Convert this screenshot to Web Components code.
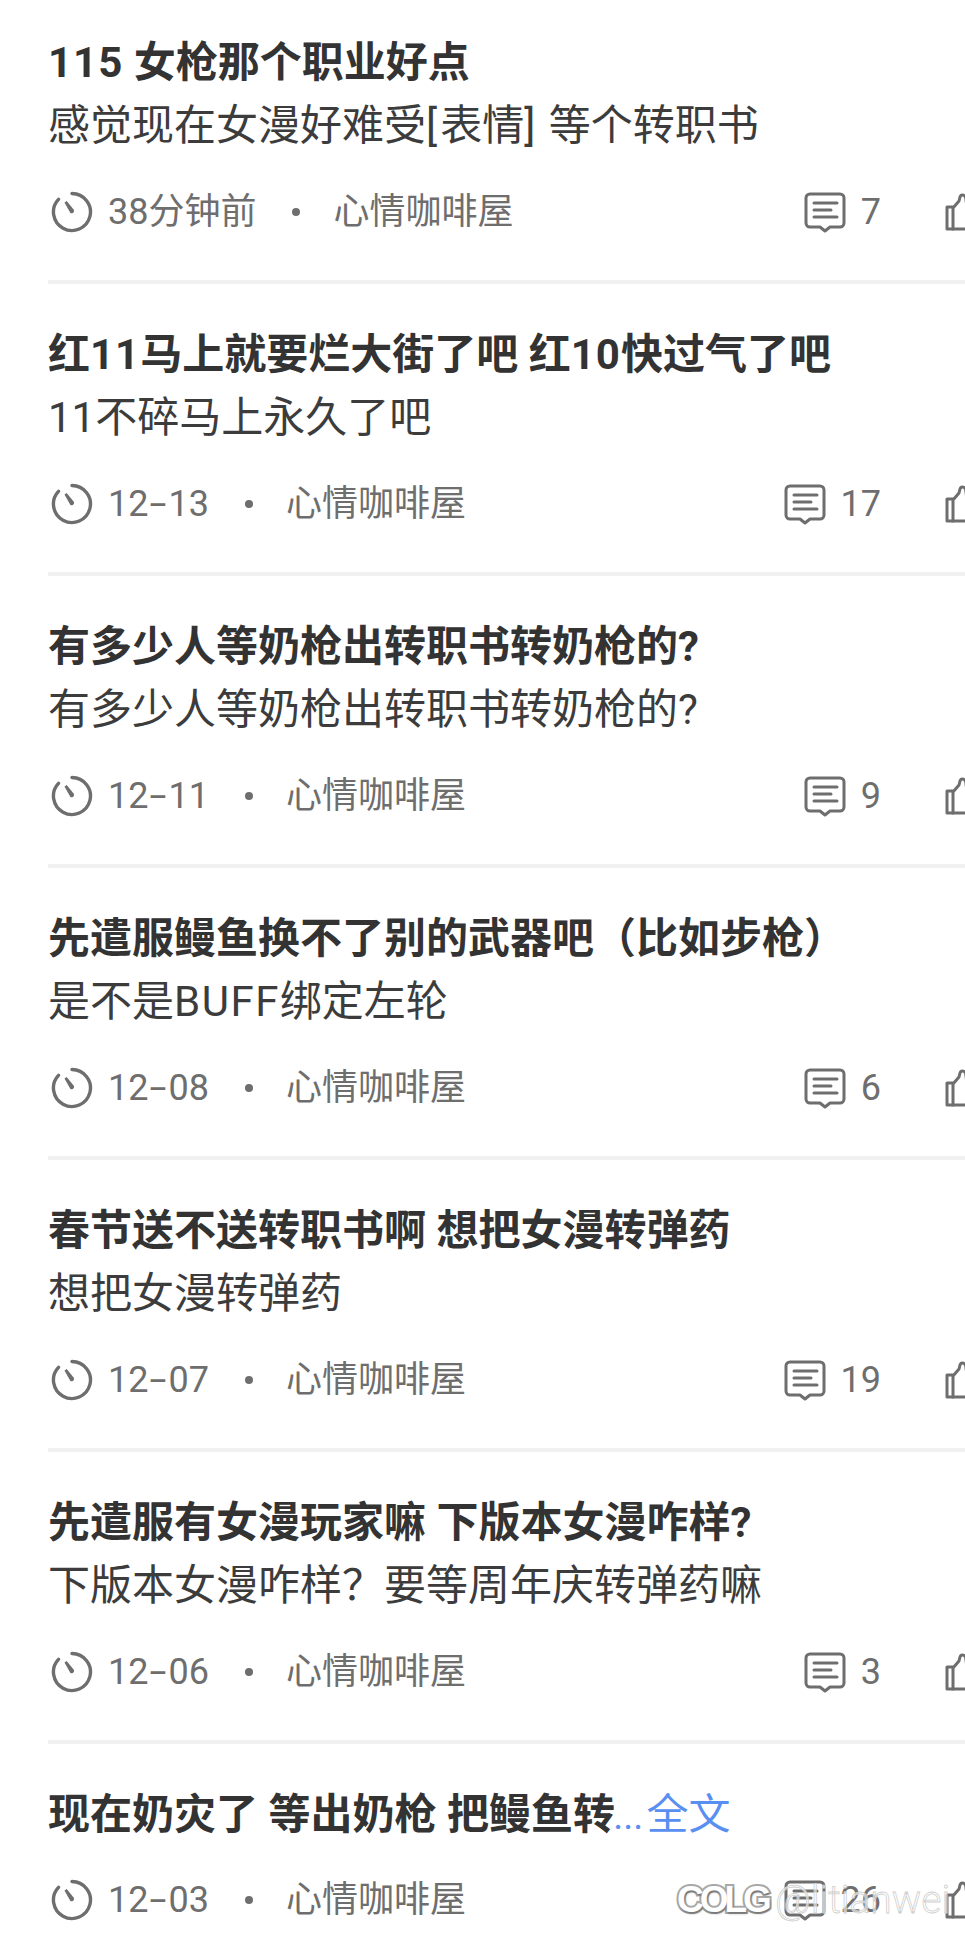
<!DOCTYPE html>
<html lang="zh">
<head>
<meta charset="utf-8">
<style>
html, body { margin: 0; background: #fff; }
body { width: 965px; height: 1939px; overflow: hidden; font-family: Roboto, "Noto Sans CJK SC", sans-serif; }
.num { letter-spacing: 1px; }
.wide { letter-spacing: 1.5px; }
.bracket { letter-spacing: 3px; }
</style>
</head>
<body>
<app-page>
  <post-item time="38分钟前" board="心情咖啡屋" count="7">
    <span slot="title"><span class="num">115</span> 女枪那个职业好点</span>
    <span slot="body">感觉现在女漫好难受<span class="bracket">[</span>表情<span class="bracket">]</span> 等个转职书</span>
  </post-item>
  <post-item time="12-13" board="心情咖啡屋" count="17">
    <span slot="title">红<span class="num">11</span>马上就要烂大街了吧 红<span class="num">10</span>快过气了吧</span>
    <span slot="body">11不碎马上永久了吧</span>
  </post-item>
  <post-item time="12-11" board="心情咖啡屋" count="9">
    <span slot="title">有多少人等奶枪出转职书转奶枪的?</span>
    <span slot="body">有多少人等奶枪出转职书转奶枪的?</span>
  </post-item>
  <post-item time="12-08" board="心情咖啡屋" count="6">
    <span slot="title">先遣服鳗鱼换不了别的武器吧（比如步枪）</span>
    <span slot="body">是不是<span class="wide">BUFF</span>绑定左轮</span>
  </post-item>
  <post-item time="12-07" board="心情咖啡屋" count="19">
    <span slot="title">春节送不送转职书啊 想把女漫转弹药</span>
    <span slot="body">想把女漫转弹药</span>
  </post-item>
  <post-item time="12-06" board="心情咖啡屋" count="3">
    <span slot="title">先遣服有女漫玩家嘛 下版本女漫咋样?</span>
    <span slot="body">下版本女漫咋样？要等周年庆转弹药嘛</span>
  </post-item>
  <post-item time="12-03" board="心情咖啡屋" count="26" last>
    <span slot="title">现在奶灾了 等出奶枪 把鳗鱼转<more-link>全文</more-link></span>
  </post-item>
  <colg-mark></colg-mark>
</app-page>

<script>
class AppPage extends HTMLElement {
  constructor() {
    super()
    this.attachShadow({ mode: "open" }).innerHTML = `
<style>
:host { display: block; position: relative; width: 965px; height: 1939px; overflow: hidden; background: #fff; }
.list { display: flex; flex-direction: column; margin-top: -8px; }
</style>
<div class="list"><slot></slot></div>`
  }
}

class PostItem extends HTMLElement {
  constructor() {
    super()
    const last = this.hasAttribute("last")
    const time = this.getAttribute("time").replace("-", `<span class="dash">-</span>`)
    this.attachShadow({ mode: "open" }).innerHTML = `
<style>
:host { display: block; padding: 41px 0 0 48px; }
.title { font-size: 42px; line-height: 60px; font-weight: 700; color: #333; white-space: nowrap; }
.body { font-size: 42px; line-height: 60px; margin-top: 3px; color: #3c3c3c; white-space: nowrap; }
.meta { display: flex; align-items: center; height: 44px; line-height: 44px; margin-top: ${last ? 32 : 34}px; font-size: 36px; color: #6e6e6e; white-space: nowrap; }
.clock { width: 44px; height: 44px; margin-left: 2px; flex: none; }
.time { margin-left: 14px; }
.dash { display: inline-block; width: 20px; text-align: center; transform: scaleX(1.7); }
.dot { width: 8px; height: 8px; border-radius: 50%; background: #6e6e6e; margin: 0 33px 0 36px; flex: none; }
.right { margin-left: auto; display: flex; align-items: center; }
.comment { width: 44px; height: 44px; flex: none; }
.count { margin-left: 14px; }
.thumb { width: 40px; height: 40px; margin-left: 64px; margin-right: -20px; flex: none; }
.line { height: 4px; margin-top: 46px; background: #f1f1f1; }
</style>
<div class="title"><slot name="title"></slot></div>
${last ? "" : `<div class="body"><slot name="body"></slot></div>`}
<div class="meta">
  <svg class="clock" viewBox="0 0 44 44" fill="none" stroke="#6e6e6e" stroke-width="3.4" stroke-linecap="round">
    <path d="M22 3.5a18.5 18.5 0 1 1-13.5 5.8"/>
    <path d="M14.5 12.5l2.2-1.6 7.3 9.2a2.5 2.5 0 0 1-3.6 2.9z" fill="#6e6e6e" stroke="none"/>
  </svg>
  <span class="time">${time}</span>
  <span class="dot"></span>
  <span class="board">${this.getAttribute("board")}</span>
  <div class="right">
    <svg class="comment" viewBox="0 0 44 44" fill="none" stroke="#6e6e6e" stroke-width="3" stroke-linejoin="round" stroke-linecap="round">
      <path d="M7 4h30a4 4 0 0 1 4 4v25a4 4 0 0 1-4 4H27l-5 4-5-4H7a4 4 0 0 1-4-4V8a4 4 0 0 1 4-4z"/>
      <path d="M11 13h23M11 20h17M11 27h23"/>
    </svg>
    <span class="count">${this.getAttribute("count")}</span>
    <svg class="thumb" viewBox="0 0 40 40" fill="none" stroke="#6e6e6e" stroke-width="3" stroke-linejoin="round" stroke-linecap="round">
      <path d="M8 15H2v22h6"/>
      <path d="M8 37h26V16H22l-1-8c0-6-5-6-6-3l-1 4-6 7v21z"/>
    </svg>
  </div>
</div>
${last ? "" : `<div class="line"></div>`}`
  }
}

class MoreLink extends HTMLElement {
  constructor() {
    super()
    this.attachShadow({ mode: "open" }).innerHTML = `
<style>
:host { display: inline; color: #5a8ff2; font-weight: 400; }
.dots { font-size: 38px; margin: 0 3px 0 -12px; letter-spacing: 0; }
</style><span class="dots">...</span><slot></slot>`
  }
}

class ColgMark extends HTMLElement {
  constructor() {
    super()
    this.attachShadow({ mode: "open" }).innerHTML = `
<style>
:host { position: absolute; left: 677px; top: 1878px; display: flex; align-items: center; gap: 8px; height: 44px; white-space: nowrap; pointer-events: none; }
.logo { width: 90px; font-family: "Liberation Sans", sans-serif; font-size: 37px; font-weight: 700; letter-spacing: -4px; color: #fff; -webkit-text-stroke: 4px #a8a8a8; paint-order: stroke fill; text-shadow: 1px 2px 2px rgba(0,0,0,.3); }
.name { font-family: Roboto, sans-serif; font-size: 39px; font-weight: 300; color: rgba(255,255,255,.6); -webkit-text-stroke: .8px #cfcfcf; }
</style>
<span class="logo">COLG</span><span class="name">@litianwei</span>`
  }
}

customElements.define("app-page", AppPage)
customElements.define("post-item", PostItem)
customElements.define("more-link", MoreLink)
customElements.define("colg-mark", ColgMark)
</script>
</body>
</html>
